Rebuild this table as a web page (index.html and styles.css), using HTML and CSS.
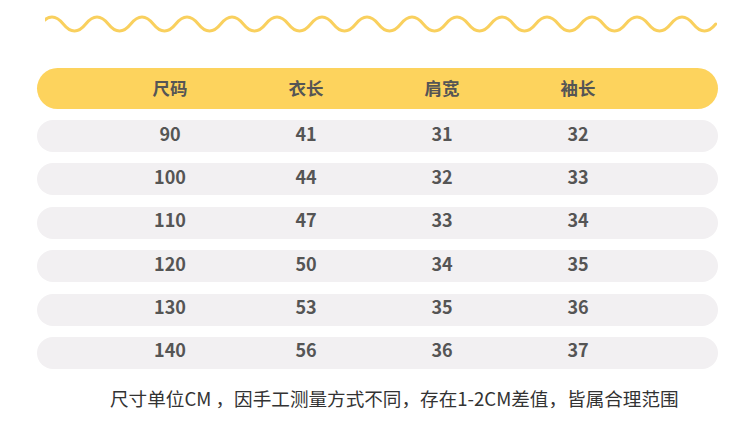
FILE: index.html
```html
<!DOCTYPE html>
<html lang="zh">
<head>
<meta charset="utf-8">
<link rel="stylesheet" href="styles.css">
</head>
<body>
<div class="page">
  <svg class="wave" width="672" height="48" viewBox="45 0 672 48">
    <path d="M40.75 24 q11.25 -14 22.5 0 t22.5 0 t22.5 0 t22.5 0 t22.5 0 t22.5 0 t22.5 0 t22.5 0 t22.5 0 t22.5 0 t22.5 0 t22.5 0 t22.5 0 t22.5 0 t22.5 0 t22.5 0 t22.5 0 t22.5 0 t22.5 0 t22.5 0 t22.5 0 t22.5 0 t22.5 0 t22.5 0 t22.5 0 t22.5 0 t22.5 0 t22.5 0 t22.5 0 t22.5 0" fill="none" stroke="#f9d05e" stroke-width="3" stroke-linecap="round"/>
  </svg>
  <div class="table">
    <div class="row head"><span>尺码</span><span>衣长</span><span>肩宽</span><span>袖长</span></div>
    <div class="row"><span>90</span><span>41</span><span>31</span><span>32</span></div>
    <div class="row"><span>100</span><span>44</span><span>32</span><span>33</span></div>
    <div class="row"><span>110</span><span>47</span><span>33</span><span>34</span></div>
    <div class="row"><span>120</span><span>50</span><span>34</span><span>35</span></div>
    <div class="row"><span>130</span><span>53</span><span>35</span><span>36</span></div>
    <div class="row"><span>140</span><span>56</span><span>36</span><span>37</span></div>
  </div>
  <p class="note">尺寸单位CM ，因手工测量方式不同，存在1-2CM差值，皆属合理范围</p>
</div>
</body>
</html>
```
FILE: styles.css
```css
html, body {
  margin: 0;
  padding: 0;
  background: #ffffff;
}
body {
  font-family: "Noto Sans CJK SC", "Noto Sans", sans-serif;
  width: 750px;
  height: 442px;
  overflow: hidden;
}
.page {
  display: flex;
  flex-direction: column;
}
.wave {
  display: block;
  margin-left: 45px;
}
.table {
  margin: 20px 0 0 37px;
  width: 681px;
  display: flex;
  flex-direction: column;
  gap: 11.4px;
}
.row {
  box-sizing: border-box;
  display: grid;
  grid-template-columns: 136px 136px 136px 136px;
  padding: 0 0 7px 65px;
  height: 32px;
  align-items: center;
  background: #f2f0f2;
  border-radius: 16px;
  color: #555555;
  font-weight: 700;
  font-size: 18px;
}
.row span {
  text-align: center;
  line-height: 1;
}
.row.head {
  height: 41px;
  padding-bottom: 1px;
  border-radius: 20.5px;
  background: #fdd35d;
  font-size: 17.5px;
  margin-bottom: -0.4px;
}
.note {
  margin: 17px 0 0 110px;
  font-size: 18.6px;
  line-height: 24px;
  color: #333333;
  white-space: nowrap;
}
```
